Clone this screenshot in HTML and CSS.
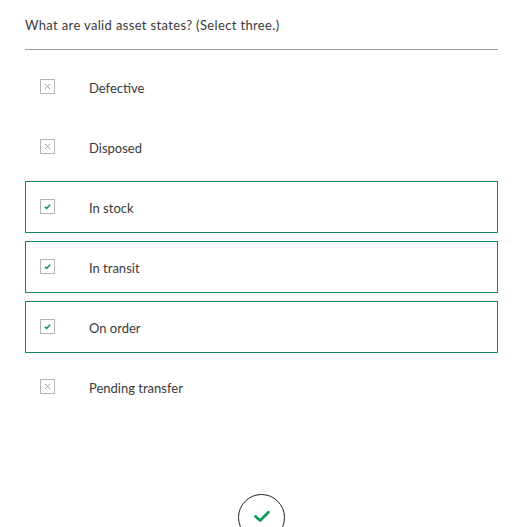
FILE: index.html
```html
<!DOCTYPE html>
<html>
<head>
<meta charset="utf-8">
<link rel="stylesheet" href="styles.css">
</head>
<body>
<div class="quiz">
  <div class="question">What are valid asset states? (Select three.)</div>
  <ul class="options">
    <li class="option"><span class="box x"><svg viewBox="0 0 13 13"><path d="M4 4L9 9M9 4L4 9"/></svg></span><span class="label">Defective</span></li>
    <li class="option"><span class="box x"><svg viewBox="0 0 13 13"><path d="M4 4L9 9M9 4L4 9"/></svg></span><span class="label">Disposed</span></li>
    <li class="option selected"><span class="box ok"><svg viewBox="0 0 13 13"><path d="M3.8 6.8L5.6 8.5L9.2 4.8"/></svg></span><span class="label">In stock</span></li>
    <li class="option selected"><span class="box ok"><svg viewBox="0 0 13 13"><path d="M3.8 6.8L5.6 8.5L9.2 4.8"/></svg></span><span class="label">In transit</span></li>
    <li class="option selected"><span class="box ok"><svg viewBox="0 0 13 13"><path d="M3.8 6.8L5.6 8.5L9.2 4.8"/></svg></span><span class="label">On order</span></li>
    <li class="option"><span class="box x"><svg viewBox="0 0 13 13"><path d="M4 4L9 9M9 4L4 9"/></svg></span><span class="label">Pending transfer</span></li>
  </ul>
  <div class="submit-wrap">
    <div class="submit"><svg viewBox="0 0 24 24"><path d="M5 12.5L10 17L19 8"/></svg></div>
  </div>
</div>
</body>
</html>
```
FILE: styles.css
```css
html, body {
  margin: 0;
  padding: 0;
  background: #fff;
  overflow: hidden;
}
body {
  font-family: "Lato", "Liberation Sans", sans-serif;
  color: #3a3a3a;
  font-size: 13px;
}
.quiz {
  width: 473px;
  margin-left: 25px;
}
.question {
  padding-top: 16px;
  height: 33px;
  line-height: 18px;
  letter-spacing: 0.35px;
  border-bottom: 1px solid #999;
}
.options {
  list-style: none;
  margin: 11px 0 0;
  padding: 0;
  display: flex;
  flex-direction: column;
  gap: 8px;
}
.option {
  height: 50px;
  border: 1px solid transparent;
  display: flex;
  align-items: center;
  padding-left: 14px;
}
.option.selected {
  border-color: #0b8a5b;
}
.box {
  width: 13px;
  height: 13px;
  border: 1px solid #b5b5b5;
  display: flex;
  margin-top: -2px;
}
.box svg {
  width: 13px;
  height: 13px;
  fill: none;
}
.box.x path {
  stroke: #999;
  stroke-width: 0.9;
}
.box.ok path {
  stroke: #0b8a5b;
  stroke-width: 1.4;
}
.label {
  margin-left: 34px;
  padding-top: 2px;
}
.submit-wrap {
  display: flex;
  justify-content: center;
  margin-top: 81px;
}
.submit {
  width: 45px;
  height: 45px;
  border: 1px solid #222;
  border-radius: 50%;
  display: flex;
  justify-content: center;
  align-items: center;
}
.submit svg {
  width: 22px;
  height: 22px;
  fill: none;
  margin-top: -4px;
}
.submit path {
  stroke: #0b9a5e;
  stroke-width: 3;
  stroke-linecap: round;
  stroke-linejoin: round;
}
```
